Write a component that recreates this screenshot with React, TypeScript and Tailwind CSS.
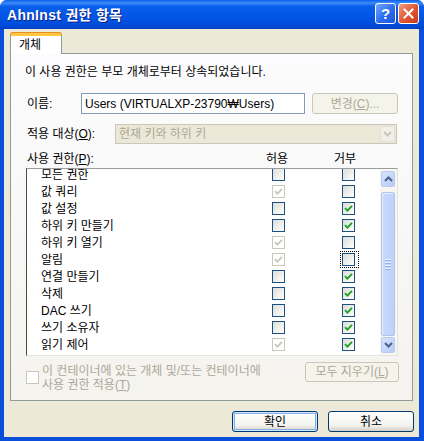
import clsx from "clsx";

type Row = { name: string; allow: "off" | "dis"; deny: boolean; focus?: boolean };

const rows: Row[] = [
  { name: "모든 권한", allow: "off", deny: false },
  { name: "값 쿼리", allow: "dis", deny: false },
  { name: "값 설정", allow: "off", deny: true },
  { name: "하위 키 만들기", allow: "off", deny: true },
  { name: "하위 키 열기", allow: "dis", deny: false },
  { name: "알림", allow: "dis", deny: false, focus: true },
  { name: "연결 만들기", allow: "off", deny: true },
  { name: "삭제", allow: "off", deny: true },
  { name: "DAC 쓰기", allow: "off", deny: true },
  { name: "쓰기 소유자", allow: "off", deny: true },
  { name: "읽기 제어", allow: "dis", deny: true },
];

function Check({ state, focus }: { state: "off" | "on" | "dis" | "disoff"; focus?: boolean }) {
  const dis = state === "dis" || state === "disoff";
  return (
    <span
      className={clsx(
        "relative flex w-[13px] h-[13px] shrink-0 items-center justify-center border",
        dis ? "border-[#CAC8BB] bg-white" : "border-[#1C5180] bg-[linear-gradient(135deg,#DCDCD7,#FFFFFF)]"
      )}
    >
      {(state === "on" || state === "dis") && (
        <svg width="9" height="9" viewBox="0 0 9 9">
          <path d="M1 4.2 L3.4 6.6 L8 1.8" fill="none" stroke={dis ? "#CAC8BB" : "#21A121"} strokeWidth="1.9" />
        </svg>
      )}
      {focus && <span className="absolute -left-[3px] -top-[3px] w-[19px] h-[17px] border border-dotted border-black" />}
    </span>
  );
}

function XpButton({ children, disabled, def, className }: { children: React.ReactNode; disabled?: boolean; def?: boolean; className?: string }) {
  return (
    <div
      className={clsx(
        "flex items-center justify-center rounded-[3px] border text-[12px]",
        disabled
          ? "border-[#C9C7BA] bg-[#F5F4EA] text-[#ACA899]"
          : "border-[#003C74] bg-[linear-gradient(to_bottom,#FFFFFF,#F3F3EF_70%,#D6D0C5)] text-black",
        def && "shadow-[inset_0_0_0_1px_#CEE7FF,inset_0_0_0_2px_#89ADE4]",
        className
      )}
    >
      {children}
    </div>
  );
}

function Chevron({ up, color }: { up?: boolean; color: string }) {
  return (
    <svg width="9" height="6" viewBox="0 0 9 6">
      <path d={up ? "M1 5 L4.5 1.5 L8 5" : "M1 1 L4.5 4.5 L8 1"} fill="none" stroke={color} strokeWidth="2" />
    </svg>
  );
}

export default function App() {
  return (
    <div className="w-[424px] h-[441px] overflow-hidden rounded-t-[7px] bg-[#0A4FDB] flex flex-col font-['Liberation_Sans','Noto_Sans_CJK_KR',sans-serif] text-[12px] text-black">
      {/* Title bar */}
      <div className="h-[29px] shrink-0 flex items-center pl-[7px] pr-[5px] bg-[linear-gradient(to_bottom,#0A5FEA_0%,#3C8CF8_10%,#0A5EEC_22%,#0055E5_60%,#004BD9_88%,#003FC6_100%)]">
        <div className="flex-1 text-white font-bold text-[14px] tracking-[0.3px] leading-none [text-shadow:1px_1px_0_#0F1E84]">AhnInst 권한 항목</div>
        <div className="flex gap-[2px] mt-[-2px]">
          <div className="w-[21px] h-[21px] rounded-[3px] border border-white flex items-center justify-center bg-[linear-gradient(135deg,#6FA7FF,#2A6CF0_55%,#1C55D6)] text-white font-bold text-[15px] leading-none">
            ?
          </div>
          <div className="w-[21px] h-[21px] rounded-[3px] border border-white flex items-center justify-center bg-[linear-gradient(135deg,#F09A80,#E0552F_55%,#C63A1B)]">
            <svg width="11" height="11" viewBox="0 0 11 11">
              <path d="M1.5 1.5 L9.5 9.5 M9.5 1.5 L1.5 9.5" stroke="white" strokeWidth="2" strokeLinecap="square" />
            </svg>
          </div>
        </div>
      </div>

      {/* Body */}
      <div className="ml-[4px] mr-[5px] h-[408px] bg-[#ECE9D8] flex flex-col">
        {/* Tab */}
        <div className="pl-[6px] pt-[4px]">
          <div className="relative z-10 mb-[-1px] w-[52px] h-[21px] bg-white border-x border-[#919B9C] rounded-t-[3px] border-t-[3px] border-t-[#FFC83C] shadow-[0_-1px_0_#E68B2C] flex items-center pl-[8px] leading-none">
            개체
          </div>
        </div>

        {/* Panel */}
        <div className="ml-[6px] w-[403px] h-[348px] border border-[#919B9C] bg-[linear-gradient(to_bottom,#FCFCFE,#F4F3EE)] flex flex-col">
          <div className="mt-[10px] pl-[14px] h-[16px] leading-[16px]">이 사용 권한은 부모 개체로부터 상속되었습니다.</div>

          <div className="mt-[13px] pl-[16px] flex items-center h-[21px]">
            <div className="w-[54px]">이름:</div>
            <div className="w-[224px] h-[21px] border border-[#7F9DB9] bg-white flex items-center pl-[3px] leading-none">
              Users (VIRTUALXP-23790₩Users)
            </div>
            <XpButton disabled className="ml-[7px] w-[86px] h-[21px]">
              변경(<span className="underline">C</span>)...
            </XpButton>
          </div>

          <div className="mt-[10px] pl-[16px] flex items-center h-[20px]">
            <div className="w-[88px]">
              적용 대상(<span className="underline">O</span>):
            </div>
            <div className="w-[282px] h-[20px] border border-[#C9C7BA] bg-[#EBE8D7] flex items-center">
              <div className="flex-1 pl-[3px] text-[#ACA899] leading-none">현재 키와 하위 키</div>
              <div className="w-[15px] h-[16px] mr-[1px] rounded-[2px] bg-[#F0EFE8] border border-[#E2E0D6] flex items-center justify-center">
                <Chevron color="#C9C7BA" />
              </div>
            </div>
          </div>

          <div className="mt-[7px] pl-[16px] h-[16px] flex items-center leading-none">
            <div className="w-[238px]">
              사용 권한(<span className="underline">P</span>):
            </div>
            <div className="w-[24px] text-center">허용</div>
            <div className="ml-[44px] w-[24px] text-center">거부</div>
          </div>

          {/* List */}
          <div className="mt-[1px] ml-[15px] w-[372px] h-[188px] border border-t-[#9C9C9C] border-l-[#4A4A4A] border-r-[#E4E3DC] border-b-[#E4E3DC] bg-white flex overflow-hidden">
            <div className="flex-1 overflow-hidden">
              <div className="mt-[-3px]">
                {rows.map((r) => (
                  <div key={r.name} className="h-[17px] flex items-center">
                    <div className="w-[245px] pl-[14px] leading-none whitespace-nowrap">{r.name}</div>
                    <Check state={r.allow} />
                    <div className="w-[57px]" />
                    <Check state={r.deny ? "on" : "off"} focus={r.focus} />
                  </div>
                ))}
              </div>
            </div>
            <div className="w-[17px] shrink-0 bg-[#F7F6F1] flex flex-col items-center py-[2px] pr-[1px]">
              <div className="w-[14px] h-[16px] rounded-[2px] border border-[#B9CBF3] bg-[linear-gradient(135deg,#D8E4FD,#B6CBF8)] flex items-center justify-center">
                <Chevron up color="#4D6185" />
              </div>
              <div className="mt-[5px] w-[14px] h-[144px] rounded-[2px] border border-[#B0C4F2] bg-[linear-gradient(to_right,#CAD9FC,#BED1FA)] shadow-[inset_1px_1px_0_#E6EEFE] flex flex-col items-center justify-center gap-[2px]">
                {[0, 1, 2, 3].map((i) => (
                  <div key={i} className="w-[6px] h-[1px] bg-[#EEF3FE] shadow-[0_1px_0_#8CB0F8]" />
                ))}
              </div>
              <div className="mt-auto w-[14px] h-[16px] rounded-[2px] border border-[#B9CBF3] bg-[linear-gradient(135deg,#D8E4FD,#B6CBF8)] flex items-center justify-center">
                <Chevron color="#4D6185" />
              </div>
            </div>
          </div>

          {/* Inherit row */}
          <div className="mt-[6px] pl-[15px] flex items-start">
            <div className="mt-[9px]">
              <Check state="disoff" />
            </div>
            <div className="ml-[3px] mt-[2px] text-[#ACA899] leading-[14px]">
              <div>이 컨테이너에 있는 개체 및/또는 컨테이너에</div>
              <div>
                사용 권한 적용(<span className="underline">T</span>)
              </div>
            </div>
            <XpButton disabled className="ml-auto mr-[13px] w-[94px] h-[20px]">
              모두 지우기(<span className="underline">L</span>)
            </XpButton>
          </div>
        </div>

        {/* Dialog buttons */}
        <div className="mt-[10px] pr-[5px] flex justify-end gap-[10px]">
          <XpButton def className="w-[86px] h-[21px]">
            확인
          </XpButton>
          <XpButton className="w-[86px] h-[21px]">취소</XpButton>
        </div>
      </div>
    </div>
  );
}
